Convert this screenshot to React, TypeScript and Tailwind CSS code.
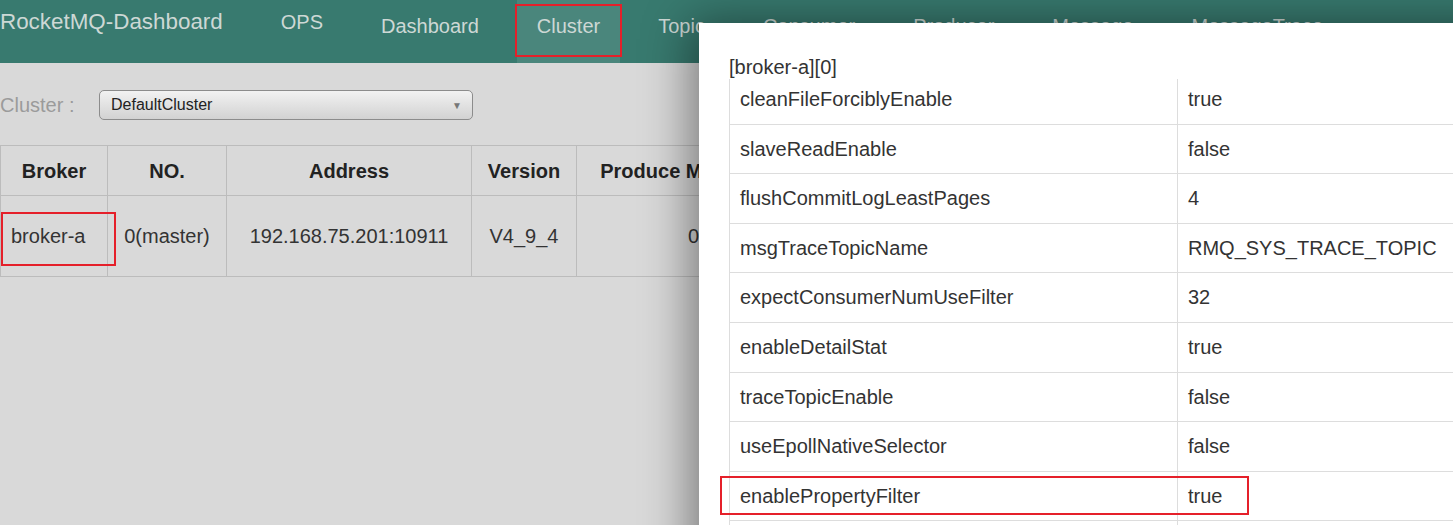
import React from "react";

const NAV = ["Dashboard", "Cluster", "Topic", "Consumer", "Producer", "Message", "MessageTrace"];

const COLUMNS = [
  { title: "Broker", width: "w-[107px]" },
  { title: "NO.", width: "w-[119px]" },
  { title: "Address", width: "w-[245px]" },
  { title: "Version", width: "w-[105px]" },
  { title: "Produce Massage TPS", width: "w-[262px]" },
  { title: "Consumer Massage TPS", width: "w-[262px]" },
];

const CONFIG: Array<[string, string]> = [
  ["cleanFileForciblyEnable", "true"],
  ["slaveReadEnable", "false"],
  ["flushCommitLogLeastPages", "4"],
  ["msgTraceTopicName", "RMQ_SYS_TRACE_TOPIC"],
  ["expectConsumerNumUseFilter", "32"],
  ["enableDetailStat", "true"],
  ["traceTopicEnable", "false"],
  ["useEpollNativeSelector", "false"],
  ["enablePropertyFilter", "true"],
  ["flushConsumerOffsetInterval", "5000"],
];

export default function App() {
  return (
    <div className="relative w-[1453px] h-[525px] overflow-hidden bg-[#d9d9d9] font-['Liberation_Sans',Arial,sans-serif] text-[20px] text-[#333]">
      {/* navbar */}
      <div className="flex h-[63px] bg-[#387a6f] text-[#cdd8d5]">
        <div className="pt-[7px] text-[22.4px] leading-[30px] whitespace-nowrap">RocketMQ-Dashboard</div>
        <div className="ml-[38px] px-5 pt-[7px] leading-[30px]">OPS</div>
        <div className="ml-[18px] flex gap-[18px]">
          {NAV.map((item) => (
            <div
              key={item}
              className={
                item === "Cluster"
                  ? "px-5 pt-[11px] leading-[30px] bg-[#4a867c] whitespace-nowrap"
                  : "px-5 pt-[11px] leading-[30px] whitespace-nowrap"
              }
            >
              {item}
            </div>
          ))}
        </div>
      </div>

      {/* cluster select */}
      <div className="flex items-center h-[30px] mt-[27px]">
        <div className="w-[99px] text-[#9b9b9b]">Cluster :</div>
        <div className="flex items-center justify-between w-[374px] h-[30px] pl-[11px] pr-[10px] rounded-[5px] border border-[#8c8c8c] bg-gradient-to-b from-[#f2f2f2] to-[#d2d2d2] text-[16px] text-[#222]">
          <span>DefaultCluster</span>
          <span className="text-[10px] text-[#777]">▼</span>
        </div>
      </div>

      {/* broker table */}
      <table className="mt-[25px] border-collapse table-fixed w-[1100px]">
        <thead>
          <tr className="h-[50px]">
            {COLUMNS.map((c) => (
              <th
                key={c.title}
                className={`${c.width} border border-[#bcbcbc] font-bold text-[#222] text-center whitespace-nowrap px-2`}
              >
                {c.title}
              </th>
            ))}
          </tr>
        </thead>
        <tbody>
          <tr className="h-[81px]">
            <td className="border border-[#bcbcbc] pl-[10px] text-left">broker-a</td>
            <td className="border border-[#bcbcbc] text-center">0(master)</td>
            <td className="border border-[#bcbcbc] text-center">192.168.75.201:10911</td>
            <td className="border border-[#bcbcbc] text-center">V4_9_4</td>
            <td className="border border-[#bcbcbc] text-center">0.00</td>
            <td className="border border-[#bcbcbc] text-center"></td>
          </tr>
        </tbody>
      </table>

      {/* broker config dialog */}
      <div className="absolute left-[699px] top-[23px] w-[900px] h-[600px] bg-white shadow-[-8px_0_45px_rgba(0,0,0,0.45)] pl-[30px] pt-[32px]">
        <div className="leading-[24px]">[broker-a][0]</div>
        <div className="h-[500px] overflow-hidden">
          <table className="-mt-[4px] border-collapse table-fixed w-[860px] border-l border-[#dddddd]">
            <tbody>
              {CONFIG.map(([key, value], i) => (
                <tr key={key}>
                  <td
                    className={`w-[448px] pl-[10px] py-[10px] leading-[28.6px] border-r border-[#dddddd] ${
                      i === 0 ? "" : "border-t"
                    }`}
                  >
                    {key}
                  </td>
                  <td className={`pl-[10px] py-[10px] leading-[28.6px] border-[#dddddd] ${i === 0 ? "" : "border-t"}`}>
                    {value}
                  </td>
                </tr>
              ))}
            </tbody>
          </table>
        </div>
      </div>

      {/* highlight boxes */}
      <div className="absolute left-[515px] top-[4px] w-[107px] h-[53px] border-2 border-[#e5202a]" />
      <div className="absolute left-[1px] top-[212px] w-[115px] h-[54px] border-2 border-[#e5202a]" />
      <div className="absolute left-[720px] top-[476px] w-[529px] h-[39px] border-2 border-[#e5202a]" />
    </div>
  );
}
